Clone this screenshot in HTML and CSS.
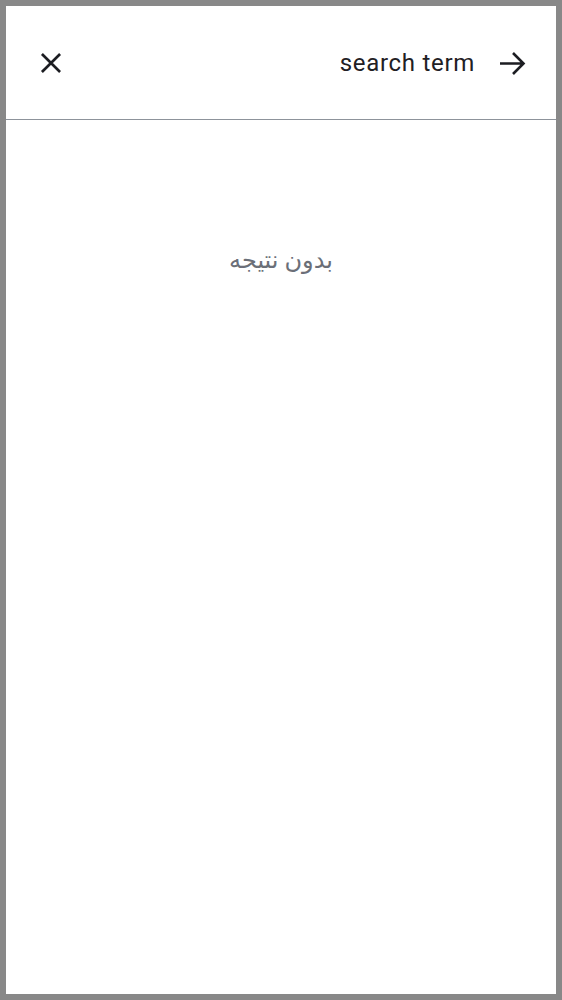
FILE: index.html
```html
<!DOCTYPE html>
<html lang="fa">
<head>
<meta charset="utf-8">
<link rel="stylesheet" href="styles.css">
</head>
<body>
<div class="app">
  <header class="search-bar">
    <button class="icon-btn close-btn" aria-label="close">
      <svg width="32" height="32" viewBox="0 0 24 24"><path d="M5.2 5.2 L18.8 18.8 M18.8 5.2 L5.2 18.8" stroke="#1c1d22" stroke-width="2" fill="none"/></svg>
    </button>
    <div class="query">
      <span class="term">search term</span>
      <button class="icon-btn go-btn" aria-label="search">
        <svg width="28" height="28" viewBox="0 0 28 28"><path d="M2 14.5 H25.5 M15 4 L25.5 14.5 L15 25" stroke="#1c1d22" stroke-width="2.6" fill="none"/></svg>
      </button>
    </div>
  </header>
  <main class="results">
    <p class="empty" dir="rtl">بدون نتیجه</p>
  </main>
</div>
</body>
</html>
```
FILE: styles.css
```css
html, body {
  margin: 0;
  padding: 0;
}
body {
  background: #888888;
  padding: 6px;
  box-sizing: border-box;
  height: 1000px;
  font-family: Roboto, "DejaVu Sans", sans-serif;
}
.app {
  background: #ffffff;
  height: 988px;
  display: flex;
  flex-direction: column;
}
.search-bar {
  height: 113px;
  border-bottom: 1px solid #8d939b;
  display: flex;
  align-items: center;
  justify-content: space-between;
  padding: 0 30px 0 29px;
}
.icon-btn {
  border: 0;
  background: none;
  padding: 0;
  margin: 0;
  display: flex;
  align-items: center;
  justify-content: center;
  cursor: pointer;
}
.query {
  display: flex;
  align-items: center;
  gap: 23px;
}
.term {
  font-size: 24px;
  color: #1f2024;
  letter-spacing: 0.7px;
}
.results {
  display: flex;
  justify-content: center;
  padding-top: 122px;
}
.empty {
  margin: 0;
  font-size: 24px;
  line-height: 36px;
  color: #6b6f78;
}
```
